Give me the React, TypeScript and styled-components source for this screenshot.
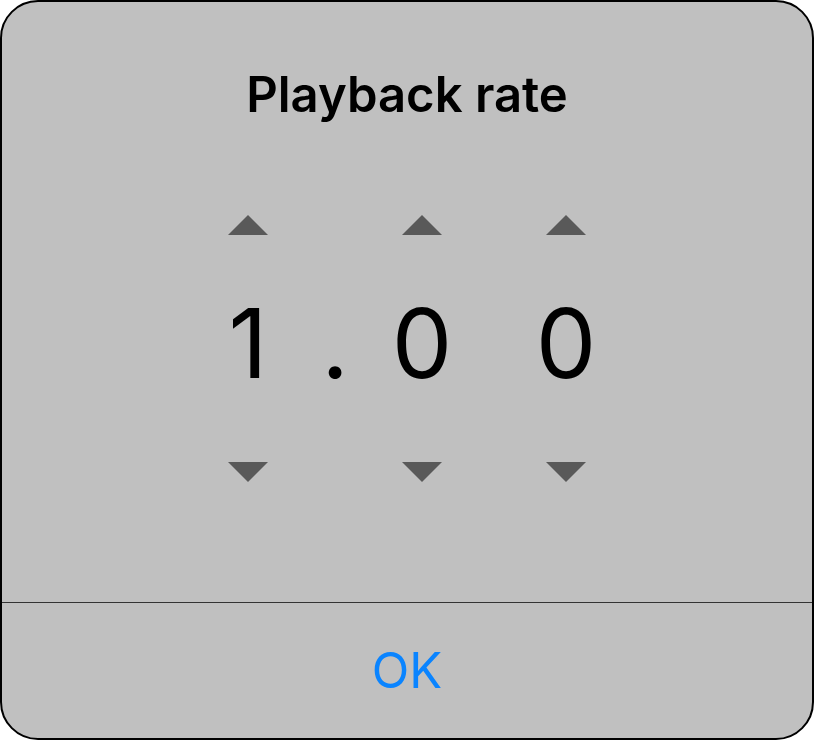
import React from "react";
import styled, { createGlobalStyle } from "styled-components";

const Global = createGlobalStyle`
  html, body { margin: 0; padding: 0; background: #ffffff; }
  body { font-family: Inter, "Noto Sans", sans-serif; }
  * { box-sizing: border-box; }
`;

const Dialog = styled.div`
  width: 814px;
  height: 740px;
  background: #c0c0c0;
  border: 2px solid #000;
  border-radius: 38px;
  display: flex;
  flex-direction: column;
  overflow: hidden;
`;

const Content = styled.div`
  flex: 1;
  display: flex;
  flex-direction: column;
  align-items: center;
  padding-top: 68px;
`;

const Title = styled.h1`
  margin: 0;
  font-family: Inter, sans-serif;
  font-weight: 600;
  font-size: 49px;
  line-height: 49px;
  color: #000;
`;

const Picker = styled.div`
  margin-top: 96px;
  display: grid;
  grid-template-columns: 100px 74px 100px 44px 100px;
  align-items: start;
`;

const Column = styled.div`
  display: flex;
  flex-direction: column;
  align-items: center;
`;

const Arrow = styled.button<{ $down?: boolean }>`
  border: 0;
  padding: 0;
  background: transparent;
  width: 40px;
  height: 20px;
  display: block;
  margin-top: ${(p) => (p.$down ? "71px" : "0")};
  svg { display: block; }
`;

const Digit = styled.div<{ $separator?: boolean }>`
  margin-top: ${(p) => (p.$separator ? "80px" : "60px")};
  font-family: Inter, sans-serif;
  font-weight: 400;
  font-size: 96px;
  line-height: 96px;
  color: #000;
`;

const Footer = styled.div`
  height: 136px;
  border-top: 1px solid #333;
  display: flex;
  align-items: center;
  justify-content: center;
`;

const OkButton = styled.button`
  border: 0;
  background: transparent;
  padding: 0;
  font-family: Inter, sans-serif;
  font-weight: 400;
  font-size: 49px;
  line-height: 49px;
  color: #0a84ff;
`;

const Tri = ({ down }: { down?: boolean }) => (
  <svg width="40" height="20" viewBox="0 0 40 20">
    <polygon
      points={down ? "0,0 40,0 20,20" : "20,0 40,20 0,20"}
      fill="#595959"
    />
  </svg>
);

const DigitColumn = ({ value }: { value: string }) => (
  <Column>
    <Arrow aria-label="increase">
      <Tri />
    </Arrow>
    <Digit>{value}</Digit>
    <Arrow $down aria-label="decrease">
      <Tri down />
    </Arrow>
  </Column>
);

export default function App() {
  return (
    <>
      <Global />
      <Dialog>
        <Content>
          <Title>Playback rate</Title>
          <Picker>
            <DigitColumn value="1" />
            <Column>
              <Digit $separator>.</Digit>
            </Column>
            <DigitColumn value="0" />
            <div />
            <DigitColumn value="0" />
          </Picker>
        </Content>
        <Footer>
          <OkButton>OK</OkButton>
        </Footer>
      </Dialog>
    </>
  );
}
